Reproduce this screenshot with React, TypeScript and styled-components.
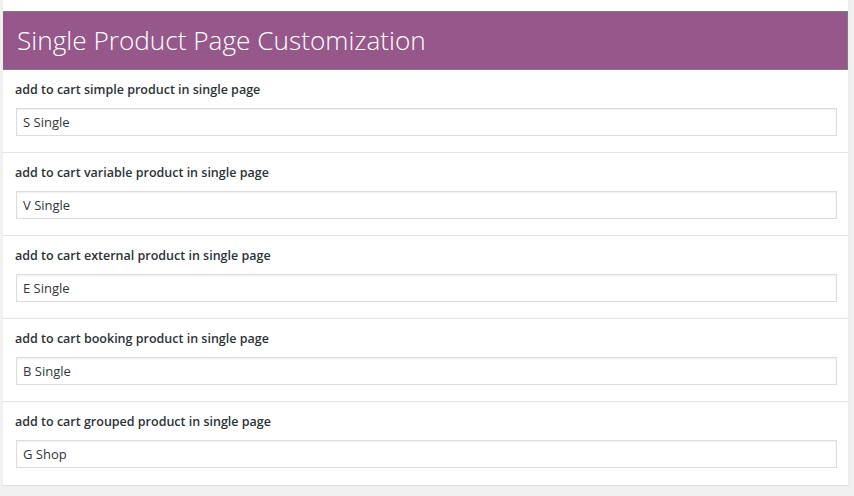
import React from "react";
import styled, { createGlobalStyle } from "styled-components";

const Global = createGlobalStyle`
  html, body { margin: 0; padding: 0; background: #f1f1f1; }
  body { font-family: "Open Sans", "Noto Sans", sans-serif; color: #23282d; }
`;

const Page = styled.div`
  padding: 0 6px 10px 3px;
`;

const Card = styled.div`
  background: #fff;
  padding-top: 11px;
  box-shadow: 0 1px 1px rgba(0, 0, 0, 0.08);
`;

const Header = styled.h1`
  margin: 0;
  height: 59px;
  box-sizing: border-box;
  background: #96588a;
  border: 1px solid #7d7d7d;
  border-left-color: #96588a;
  display: flex;
  align-items: center;
  padding: 0 0 2px 13px;
  color: #fff;
  font-family: "Open Sans", sans-serif;
  font-weight: 300;
  font-size: 26.2px;
`;

const Row = styled.div`
  display: flex;
  flex-direction: column;
  padding: 10px 11px 16px 12px;
  border-bottom: 1px solid #e5e5e5;
  &:last-child { border-bottom: none; padding-bottom: 17px; }
`;

const Label = styled.label`
  font-family: "Open Sans", sans-serif;
  font-size: 12.5px;
  font-weight: 600;
  line-height: 20px;
  color: #2c3338;
  margin-bottom: 8px;
`;

const Input = styled.input`
  margin: 0 0 0 1px;
  height: 28px;
  box-sizing: border-box;
  border: 1px solid #ddd;
  box-shadow: inset 0 1px 2px rgba(0, 0, 0, 0.07);
  padding: 0 6px;
  font-family: "Open Sans", sans-serif;
  font-size: 13px;
  color: #32373c;
  background: #fff;
  outline: none;
`;

const fields = [
  { label: "add to cart simple product in single page", value: "S Single" },
  { label: "add to cart variable product in single page", value: "V Single" },
  { label: "add to cart external product in single page", value: "E Single" },
  { label: "add to cart booking product in single page", value: "B Single" },
  { label: "add to cart grouped product in single page", value: "G Shop" },
];

export default function App() {
  return (
    <Page>
      <Global />
      <Card>
        <Header>Single Product Page Customization</Header>
        {fields.map((f) => (
          <Row key={f.label}>
            <Label>{f.label}</Label>
            <Input defaultValue={f.value} readOnly />
          </Row>
        ))}
      </Card>
    </Page>
  );
}
